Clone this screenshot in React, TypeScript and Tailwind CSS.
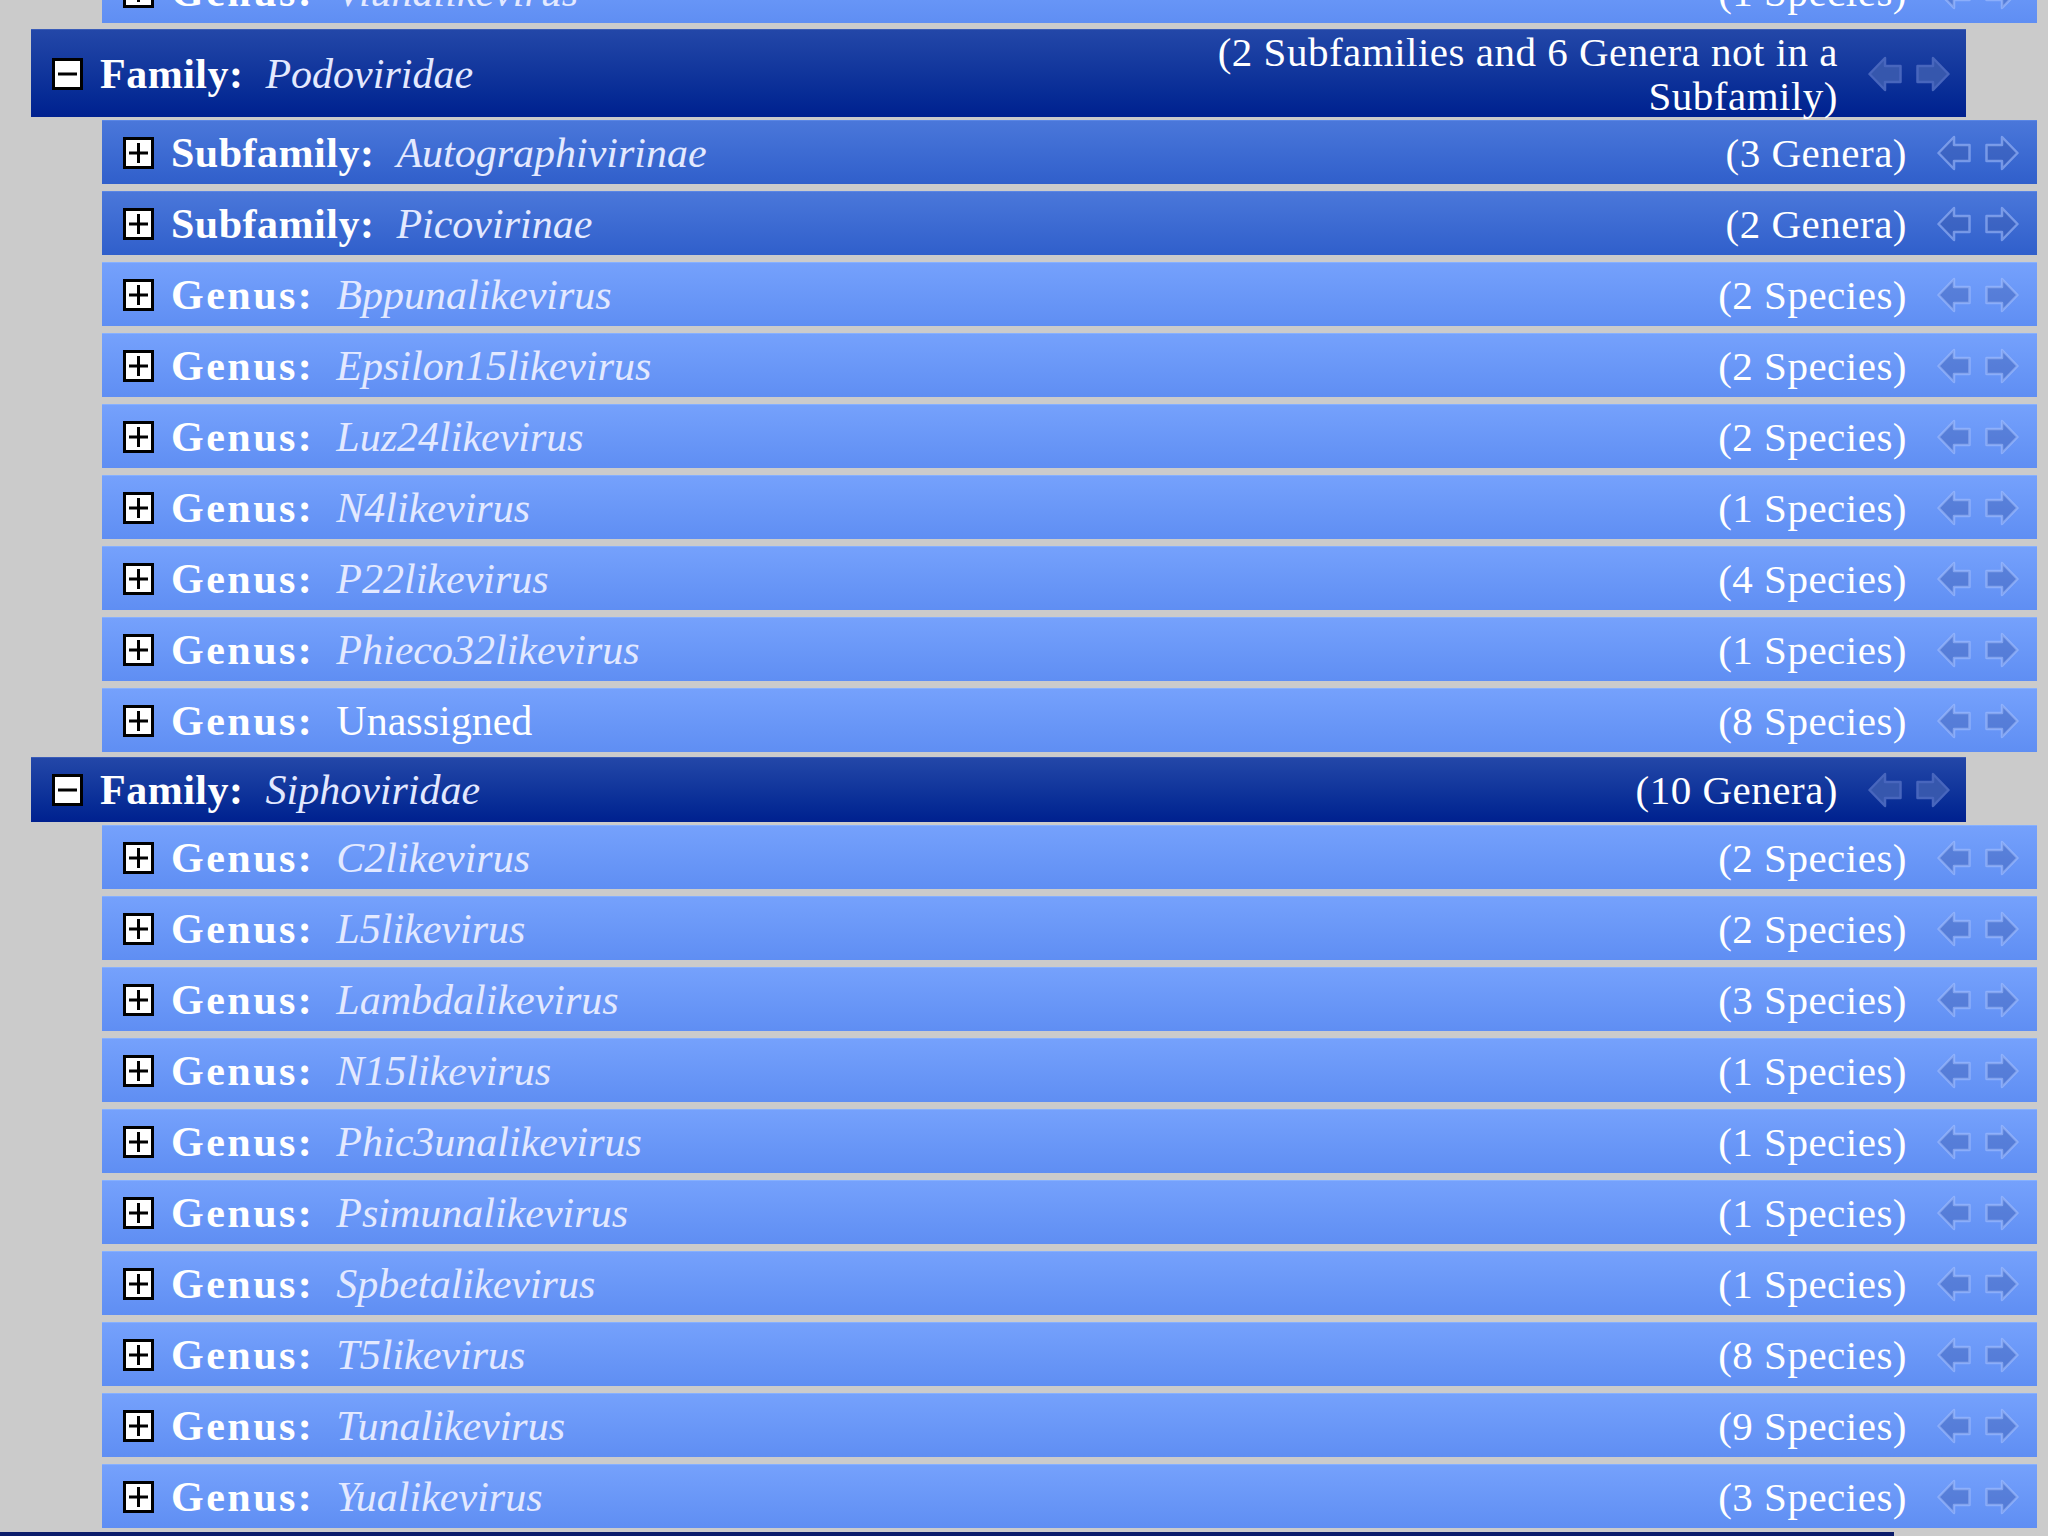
import React from 'react';

type Kind = 'family' | 'subfamily' | 'genus';

type Row = {
  kind: Kind;
  name: string;
  italic?: boolean;
  count: string;
  open?: boolean;
  first?: boolean;
};

const rows: Row[] = [
  { kind: 'genus', name: 'Viunalikevirus', count: '(1 Species)', first: true },
  { kind: 'family', name: 'Podoviridae', count: '(2 Subfamilies and 6 Genera not in a Subfamily)', open: true },
  { kind: 'subfamily', name: 'Autographivirinae', count: '(3 Genera)' },
  { kind: 'subfamily', name: 'Picovirinae', count: '(2 Genera)' },
  { kind: 'genus', name: 'Bppunalikevirus', count: '(2 Species)' },
  { kind: 'genus', name: 'Epsilon15likevirus', count: '(2 Species)' },
  { kind: 'genus', name: 'Luz24likevirus', count: '(2 Species)' },
  { kind: 'genus', name: 'N4likevirus', count: '(1 Species)' },
  { kind: 'genus', name: 'P22likevirus', count: '(4 Species)' },
  { kind: 'genus', name: 'Phieco32likevirus', count: '(1 Species)' },
  { kind: 'genus', name: 'Unassigned', italic: false, count: '(8 Species)' },
  { kind: 'family', name: 'Siphoviridae', count: '(10 Genera)', open: true },
  { kind: 'genus', name: 'C2likevirus', count: '(2 Species)' },
  { kind: 'genus', name: 'L5likevirus', count: '(2 Species)' },
  { kind: 'genus', name: 'Lambdalikevirus', count: '(3 Species)' },
  { kind: 'genus', name: 'N15likevirus', count: '(1 Species)' },
  { kind: 'genus', name: 'Phic3unalikevirus', count: '(1 Species)' },
  { kind: 'genus', name: 'Psimunalikevirus', count: '(1 Species)' },
  { kind: 'genus', name: 'Spbetalikevirus', count: '(1 Species)' },
  { kind: 'genus', name: 'T5likevirus', count: '(8 Species)' },
  { kind: 'genus', name: 'Tunalikevirus', count: '(9 Species)' },
  { kind: 'genus', name: 'Yualikevirus', count: '(3 Species)' },
];

const labels: Record<Kind, string> = {
  family: 'Family:',
  subfamily: 'Subfamily:',
  genus: 'Genus:',
};

const ToggleBox = ({ open }: { open?: boolean }) => (
  <svg width="31" height="32" viewBox="0 0 31 32" className="shrink-0">
    <rect x="1.5" y="1.5" width="28" height="29" fill="#ffffff" stroke="#000000" strokeWidth="3" />
    <rect x="6" y="14.5" width="19" height="3" fill="#000000" />
    {!open && <rect x="14" y="6" width="3" height="20" fill="#000000" />}
  </svg>
);

const Arrow = ({ dir, dark }: { dir: 'left' | 'right'; dark?: boolean }) => (
  <svg width="34" height="36" viewBox="0 0 34 36" className="shrink-0">
    <path
      d={dir === 'right' ? 'M1.5 10 H17 V2 L32.5 18 L17 34 V26 H1.5 Z' : 'M32.5 10 H17 V2 L1.5 18 L17 34 V26 H32.5 Z'}
      fill={dark ? '#3657ad' : 'rgba(60,90,175,0.42)'}
      stroke={dark ? '#4866bd' : 'rgba(170,195,255,0.55)'}
      strokeWidth="2.5"
      strokeLinejoin="round"
    />
  </svg>
);

const TaxonRow = ({ row, afterFamily }: { row: Row; afterFamily: boolean }) => {
  const isFamily = row.kind === 'family';
  const bg =
    row.kind === 'family'
      ? 'bg-gradient-to-b from-[#2347a8] to-[#00208f] border-t border-[#3a5cb8]'
      : row.kind === 'subfamily'
        ? 'bg-gradient-to-b from-[#4a77da] to-[#305fcb] border-t border-[#5a86e4]'
        : 'bg-gradient-to-b from-[#75a1fc] to-[#5f8ef3] border-t border-[#86b0ff]';
  const spacing = row.first
    ? 'mt-[-41px]'
    : isFamily
      ? row.name === 'Podoviridae'
        ? 'mt-[6px]'
        : 'mt-[5px]'
      : afterFamily
        ? 'mt-[3px]'
        : 'mt-[7px]';
  const size = isFamily
    ? row.name === 'Podoviridae'
      ? 'h-[88px] ml-[31px] pr-[16px]'
      : 'h-[65px] ml-[31px] pr-[16px]'
    : 'h-[64px] ml-[102px] pr-[18px]';
  const labelTrack = row.kind === 'genus' ? 'tracking-[2.5px]' : 'tracking-[0.5px]';

  return (
    <div className={`${spacing} ${size} ${bg} w-[1935px] shrink-0 flex items-center pl-[21px] text-white font-['Liberation_Serif',serif]`}>
      <ToggleBox open={row.open} />
      <span className={`ml-[17px] text-[42px] font-bold leading-none ${labelTrack}`}>{labels[row.kind]}</span>
      <span
        className={`ml-[22px] text-[42px] leading-none ${row.italic === false ? 'text-white' : 'italic text-[#e3e9ff]'}`}
      >
        {row.name}
      </span>
      <div className="flex-1" />
      <span className="max-w-[640px] text-right text-[41px] leading-[44px] tracking-[0.5px]">{row.count}</span>
      <div className="ml-[30px] flex items-center gap-[14px]">
        <Arrow dir="left" dark={isFamily} />
        <Arrow dir="right" dark={isFamily} />
      </div>
    </div>
  );
};

export default function App() {
  return (
    <div className="w-[2048px] h-[1536px] overflow-hidden bg-[#cbcbcb] flex flex-col">
      {rows.map((row, i) => (
        <TaxonRow key={row.name + i} row={row} afterFamily={i > 0 && rows[i - 1].kind === 'family'} />
      ))}
      <div className="mt-[4px] h-[6px] w-[1894px] shrink-0 bg-[#0b1d6a]" />
    </div>
  );
}
